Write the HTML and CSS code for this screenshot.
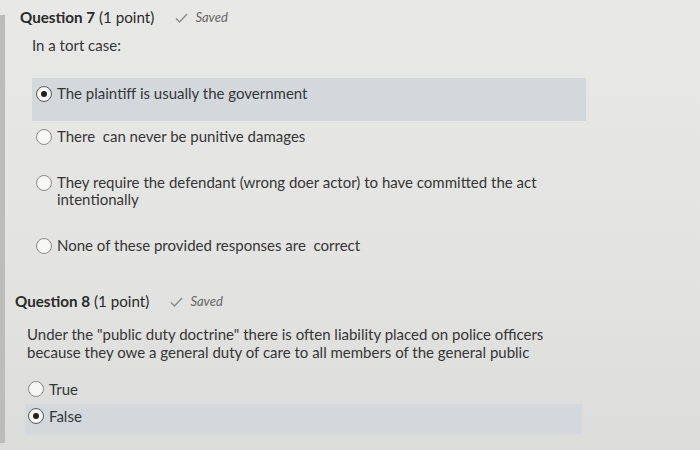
FILE: index.html
```html
<!DOCTYPE html>
<html>
<head>
<meta charset="utf-8">
<link rel="stylesheet" href="styles.css">
</head>
<body>
<div class="page">
  <div class="strip"></div>
  <div class="content">
    <section class="q q7">
      <div class="q-head">
        <span class="q-title"><b>Question 7</b> (1 point)</span>
        <span class="saved"><svg class="check" width="13" height="10" viewBox="0 0 13 10"><path d="M1 5.5 L4.5 9 L12 1" fill="none" stroke="#8a8a8a" stroke-width="1.4"/></svg><i>Saved</i></span>
      </div>
      <p class="q-text">In a tort case:</p>
      <div class="options">
        <div class="opt selected"><span class="radio on"></span><span class="opt-text">The plaintiff is usually the government</span></div>
        <div class="opt"><span class="radio"></span><span class="opt-text">There&nbsp; can never be punitive damages</span></div>
        <div class="opt"><span class="radio"></span><span class="opt-text">They require the defendant (wrong doer actor) to have committed the act<br>intentionally</span></div>
        <div class="opt"><span class="radio"></span><span class="opt-text">None of these provided responses are&nbsp; correct</span></div>
      </div>
    </section>
    <section class="q q8">
      <div class="q-head">
        <span class="q-title"><b>Question 8</b> (1 point)</span>
        <span class="saved"><svg class="check" width="13" height="10" viewBox="0 0 13 10"><path d="M1 5.5 L4.5 9 L12 1" fill="none" stroke="#8a8a8a" stroke-width="1.4"/></svg><i>Saved</i></span>
      </div>
      <p class="q-text">Under the "public duty doctrine" there is often liability placed on police officers<br>because they owe a general duty of care to all members of the general public</p>
      <div class="tf">
        <div class="tf-row"><span class="radio"></span><span class="opt-text">True</span></div>
        <div class="tf-row selected"><span class="radio on"></span><span class="opt-text">False</span></div>
      </div>
    </section>
  </div>
</div>
</body>
</html>
```
FILE: styles.css
```css
html, body {
  margin: 0;
  padding: 0;
}
body {
  width: 700px;
  height: 450px;
  overflow: hidden;
  background: linear-gradient(180deg, #e8e8e6 0%, #e3e3e1 60%, #dcdcda 100%);
  font-family: Lato, "Open Sans", sans-serif;
  color: #363636;
}
.page {
  display: flex;
  height: 450px;
}
.strip {
  width: 5px;
  margin-top: 15px;
  height: 428px;
  background: #bcbcba;
  flex: none;
}
.content {
  flex: 1;
}
.q-head {
  display: flex;
  align-items: center;
  height: 20px;
  font-size: 15.2px;
  color: #2a2a2a;
}
.q-title b {
  font-weight: 700;
}
.saved {
  display: inline-flex;
  align-items: center;
  margin-left: 21px;
  font-size: 13px;
  color: #666;
}
.check {
  margin-right: 7px;
  margin-top: 1px;
}
.q-text {
  margin: 0;
  font-size: 15px;
  line-height: 18px;
}
.q7 {
  margin-left: 15px;
  padding-top: 7px;
}
.q7 .q-text {
  margin-top: 9px;
  margin-left: 12px;
}
.options {
  margin-top: 24px;
  margin-left: 12px;
  width: 554px;
}
.opt {
  display: flex;
  align-items: flex-start;
  padding: 7px 4px 22px;
  font-size: 15px;
  line-height: 17px;
}
.opt.selected {
  background: #d3d8dd;
  padding-bottom: 19px;
}
.radio {
  flex: none;
  box-sizing: border-box;
  width: 16px;
  height: 16px;
  margin-top: 0.5px;
  border-radius: 50%;
  border: 1px solid #8c8c8c;
  background: #f7f7f6;
  position: relative;
}
.radio.on {
  border: 1.5px solid #5a5a5a;
  background: #f4f4f4;
}
.radio.on::after {
  content: "";
  position: absolute;
  left: 50%;
  top: 50%;
  width: 6px;
  height: 6px;
  margin: -3px 0 0 -3px;
  border-radius: 50%;
  background: #1e1e1e;
}
.opt-text {
  margin-left: 5px;
}
.q8 {
  margin-left: 10px;
  margin-top: 15px;
}
.q8 .q-text {
  margin-top: 14px;
  margin-left: 12px;
}
.tf {
  margin-top: 16px;
  margin-left: 10px;
  width: 557px;
}
.tf-row {
  display: flex;
  align-items: flex-start;
  padding: 3px 3px 6px;
  font-size: 15px;
  line-height: 18px;
}
.tf-row .radio {
  margin-top: 1px;
}
.tf-row.selected {
  background: #d3d8dd;
  padding-bottom: 9px;
}
```
